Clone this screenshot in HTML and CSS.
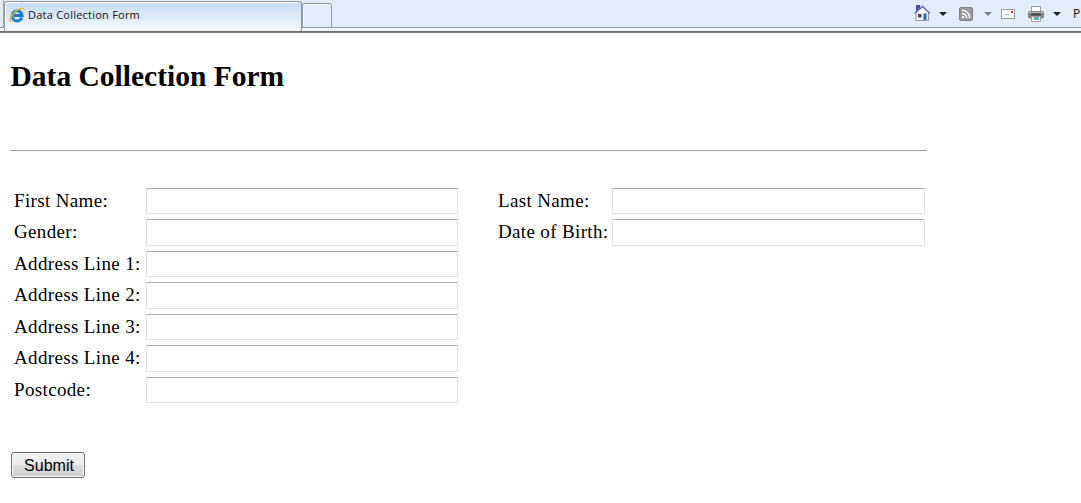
FILE: index.html
```
<!DOCTYPE html>
<html lang="en">
  <head>
    <meta charset="UTF-8" />
    <meta name="viewport" content="width=device-width, initial-scale=1.0" />
    <title>Data Collection Form</title>
    <link rel="stylesheet" href="styles.css">
  </head>

  <body>
    <header class="tab-bar">
      <div class="edge"></div>
      <div class="tab">
        <svg class="tab-icon" width="16" height="16" viewBox="0 0 16 16">
          <path d="M12.8 10.6A5 5 0 1 1 13.1 8.5H5" fill="none" stroke="#1b78c2" stroke-width="3" />
          <path d="M11.8 11A4.4 4.4 0 0 1 3.8 9.5" fill="none" stroke="#4fb7ea" stroke-width="1" />
          <path d="M2.4 14.8C-.8 14.5 1.8 8.2 6.4 4.4 10.5 1 15.5-.3 15.2 3.4" fill="none" stroke="#e3b634" stroke-width="1.4" />
        </svg>
        <span>Data Collection Form</span>
      </div>
      <div class="new-tab"></div>
      <div class="toolbar">
        <svg class="home" width="18" height="18" viewBox="0 0 18 18">
          <path d="M3.5 1.5h3v4l-3 2z" fill="#4a58b0" stroke="#343f8c" />
          <path d="M3 8.5 9.5 3 15.5 8.5V16.5H3z" fill="#f6f7fa" stroke="#8a94a8" />
          <path d="M1.5 9.5 9.5 2.3 17 9.5" fill="none" stroke="#6675b8" stroke-width="1.5" />
          <path d="M5 10h3.5v3.5H5z" fill="#3f4a58" />
          <path d="M10.5 9.5h3V16h-3z" fill="#2d679f" />
          <path d="M2.5 16.5h13.5" stroke="#8d9a9f" />
        </svg>
        <i class="arrow home-arrow"></i>
        <svg class="feed" width="14" height="14" viewBox="0 0 14 14">
          <rect x=".5" y=".5" width="13" height="13" rx="1.5" fill="#999" stroke="#808080" />
          <path d="M3 3.2A7.8 7.8 0 0 1 10.8 11M3 6.4A4.6 4.6 0 0 1 7.6 11" fill="none" stroke="#fff" stroke-width="1.5" />
          <circle cx="4" cy="10.1" r="1.2" fill="#fff" />
        </svg>
        <i class="arrow faded feed-arrow"></i>
        <svg class="mail" width="14" height="10" viewBox="0 0 14 10">
          <rect x=".5" y=".5" width="13" height="9" fill="#fafafa" stroke="#999ca2" />
          <path d="M10 2h2v2h-2z" fill="#ca3c35" />
          <path d="M4 5.5h4" stroke="#b8b8c0" />
        </svg>
        <svg class="printer" width="16" height="16" viewBox="0 0 16 16">
          <path d="M3.5.5h9V6h-9z" fill="#fff" stroke="#9a9a9a" />
          <rect y="5" width="16" height="7.5" rx="2" fill="#858585" />
          <path d="M1 6.5h14" stroke="#bbb" />
          <path d="M3 8.5h10" stroke="#444" stroke-width="2" />
          <path d="M3.5 10.5h9v5h-9z" fill="#fff" stroke="#a0a0a0" />
          <path d="M6 11h5v3H6z" fill="#5aa9bd" />
        </svg>
        <i class="arrow printer-arrow"></i>
        <span class="page-menu">P</span>
      </div>
    </header>

    <main>
      <h1>Data Collection Form</h1>
      <hr />
      <form>
        <div class="columns">
          <div class="fields">
            <label for="firstName">First Name:</label>
            <input type="text" id="firstName" />
            <label for="gender">Gender:</label>
            <input type="text" id="gender" />
            <label for="address1">Address Line 1:</label>
            <input type="text" id="address1" />
            <label for="address2">Address Line 2:</label>
            <input type="text" id="address2" />
            <label for="address3">Address Line 3:</label>
            <input type="text" id="address3" />
            <label for="address4">Address Line 4:</label>
            <input type="text" id="address4" />
            <label for="postcode">Postcode:</label>
            <input type="text" id="postcode" />
          </div>
          <div class="fields right">
            <label for="lastName">Last Name:</label>
            <input type="text" id="lastName" />
            <label for="dob">Date of Birth:</label>
            <input type="text" id="dob" />
          </div>
        </div>
        <button type="button" class="submit">Submit</button>
      </form>
    </main>
  </body>
</html>
```

FILE: styles.css
```
body {
  margin: 0;
  background-color: #fff;
  color: #000;
  font-family: "Liberation Serif", "Times New Roman", serif;
  overflow: hidden;
}

.tab-bar {
  display: flex;
  align-items: flex-start;
  box-sizing: border-box;
  height: 33px;
  background: linear-gradient(#e2edf9 0 27px, #8f99a5 27px 28px, #f4f7fb 28px 31px, #6e6e6e 31px 32px, #7c7c7c 32px);
}

.edge {
  box-sizing: border-box;
  width: 4px;
  height: 28px;
  border-right: 1px solid #9aa5b4;
  border-bottom: 1px solid #8f99a5;
  border-bottom-right-radius: 3px;
}

.tab {
  display: flex;
  align-items: center;
  gap: 3px;
  box-sizing: border-box;
  width: 298px;
  height: 30px;
  margin-top: 1px;
  padding: 0 0 4px 4px;
  border: 1px solid #8f99a5;
  border-bottom: 0;
  border-radius: 3px 3px 0 0;
  background: linear-gradient(#c5dcf8, #f4f7fb 27px);
  box-shadow: inset 1px 1px #fff;
  color: #111;
  font-family: "Open Sans", sans-serif;
  font-size: 11px;
  letter-spacing: 0.23px;
  white-space: nowrap;
}

.new-tab {
  box-sizing: border-box;
  width: 30px;
  height: 25px;
  margin-top: 3px;
  border: 1px solid #8f99a5;
  border-radius: 2px 3px 0 2px;
  background-color: #e2edf9;
  box-shadow: inset 1px 1px #f8fbff;
}

.toolbar {
  display: flex;
  align-items: center;
  height: 27px;
  margin-left: auto;
  width: 168px;
}

.toolbar svg,
.arrow {
  flex: none;
}

.arrow {
  border: 4px solid transparent;
  border-top-color: #1d242b;
  border-bottom: 0;
}

.arrow.faded {
  border-top-color: #777d84;
}

.home {
  margin-top: -2px;
}

.home-arrow {
  margin: 0 12px 0 8px;
}

.feed-arrow {
  margin: 0 9px 0 11px;
}

.mail {
  margin-right: 13px;
}

.printer-arrow {
  margin: 0 12px 0 9px;
}

.page-menu {
  color: #111;
  font-family: "Open Sans", sans-serif;
  font-size: 12px;
}

main {
  width: 917px;
  padding: 0 10px;
}

h1 {
  margin: 26px 0 57px;
  padding-left: 0.5px;
  font-size: 29.5px;
  line-height: 34px;
}

hr {
  height: 1px;
  margin: 0;
  border: 0;
  background-color: #a0a0a0;
}

form {
  padding-top: 36.9px;
}

.columns {
  display: flex;
  align-items: flex-start;
  gap: 40px;
  padding-left: 4px;
}

.fields {
  display: grid;
  grid-template-columns: 132px 312px;
  grid-auto-rows: 26.5px;
  row-gap: 5px;
}

.fields.right {
  grid-template-columns: 114px 313px;
}

label {
  font-size: 19px;
  letter-spacing: 0.35px;
  line-height: 25px;
  white-space: nowrap;
}

input {
  box-sizing: border-box;
  width: 100%;
  height: 26.5px;
  margin: 0;
  padding: 2px 4px;
  border: 1px solid #e0e3e6;
  border-top-color: #abadb3;
  border-radius: 1px;
  background-color: #fff;
}

.submit {
  display: block;
  box-sizing: border-box;
  width: 74px;
  height: 26px;
  margin: 48.6px 0 0 1px;
  padding: 2px 0 0 2px;
  border: 1px solid #707070;
  border-radius: 3px;
  background: linear-gradient(#f2f2f2, #ebebeb 48%, #dddddd 50%, #cfcfcf);
  box-shadow: inset 0 0 0 1px #f8f8f8;
  color: #000;
  font-family: "Liberation Sans", Arial, sans-serif;
  font-size: 16px;
}
```
